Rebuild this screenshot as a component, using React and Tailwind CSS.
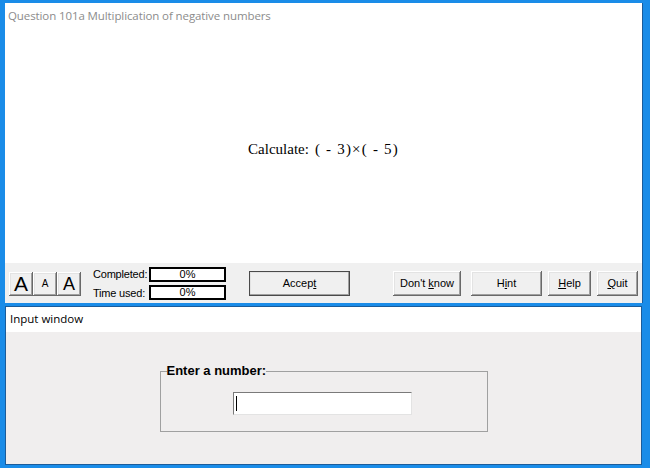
import React from "react";

const btn3d =
  "bg-[#f0f0f0] shadow-[inset_-1px_-1px_#696969,inset_1px_1px_#ffffff,inset_-2px_-2px_#a0a0a0,inset_2px_2px_#e3e3e3]";

function Btn({ className = "", children }) {
  return (
    <div
      className={`${btn3d} h-[25px] flex items-center justify-center text-[11px] text-black ${className}`}
      style={{ fontFamily: '"Liberation Sans", Arial, sans-serif' }}
    >
      {children}
    </div>
  );
}

export default function App() {
  return (
    <div className="w-[650px] h-[468px] bg-[#1a8ce8] pt-[3px] pl-[5px] pr-[7px] flex flex-col overflow-hidden">
      {/* Top window */}
      <div className="h-[300px] flex flex-col border-r border-[#1b5c9a]">
        <div className="h-[260px] bg-white flex flex-col">
          <div
            className="pl-[3px] pt-[5px] text-[11.5px] leading-[16px] text-[#8c8c8c] tracking-[-0.1px]"
            style={{ fontFamily: '"Open Sans", "Noto Sans", sans-serif' }}
          >
            Question 101a Multiplication of negative numbers
          </div>
          <div
            className="mt-[115px] flex justify-center text-[15px] leading-[20px] text-black"
            style={{ fontFamily: '"Liberation Serif", "Times New Roman", serif' }}
          >
            <span>Calculate:</span>
            <span className="ml-[6px] tracking-[1.2px]">( - 3)×( - 5)</span>
          </div>
        </div>
        <div
          className="h-[40px] bg-[#f0f0f0] flex items-center pl-[4px] text-[11px] text-black"
          style={{ fontFamily: '"Liberation Sans", Arial, sans-serif' }}
        >
          <div className="flex mt-[1px]">
            <div className={`${btn3d} w-[24px] h-[24px] flex items-center justify-center text-[21px] leading-none`}>A</div>
            <div className={`${btn3d} w-[24px] h-[24px] flex items-center justify-center text-[10px] leading-none`}>A</div>
            <div className={`${btn3d} w-[24px] h-[24px] flex items-center justify-center text-[18px] leading-none`}>A</div>
          </div>
          <div className="ml-[12px] flex flex-col gap-[2px] mt-[1px]">
            <div className="flex items-center">
              <span className="w-[56px] tracking-[-0.2px]">Completed:</span>
              <div className="w-[77px] h-[15px] bg-white border-2 border-black flex items-center justify-center leading-none">0%</div>
            </div>
            <div className="flex items-center">
              <span className="w-[56px] tracking-[-0.2px]">Time used:</span>
              <div className="w-[77px] h-[15px] bg-white border-2 border-black flex items-center justify-center leading-none">0%</div>
            </div>
          </div>
          <Btn className="ml-[23px] w-[101px] outline outline-1 outline-[#4a4a4a] -outline-offset-1">
            Accep<span className="underline">t</span>
          </Btn>
          <Btn className="ml-[43px] w-[68px]">
            Don't&nbsp;<span className="underline">k</span>now
          </Btn>
          <Btn className="ml-[10px] w-[71px]">
            H<span className="underline">i</span>nt
          </Btn>
          <Btn className="ml-[6px] w-[43px]">
            <span className="underline">H</span>elp
          </Btn>
          <Btn className="ml-[6px] w-[41px]">
            <span className="underline">Q</span>uit
          </Btn>
        </div>
      </div>

      {/* Bottom window */}
      <div className="mt-[3px] h-[159px] mr-[1px] border border-[#1b5c9a] flex flex-col">
        <div
          className="h-[25px] bg-white pl-[4px] pt-[5px] text-[11.5px] leading-[14px] text-black"
          style={{ fontFamily: '"Open Sans", "Noto Sans", sans-serif' }}
        >
          Input window
        </div>
        <div className="flex-1 bg-[#f0eeee] flex justify-center pt-[32px]">
          <fieldset className="w-[328px] h-[68px] border border-[#a0a0a0] pl-[6px] pr-0 pb-0 flex flex-col items-center">
            <legend
              className="px-0 text-[13px] leading-[14px] font-bold text-black"
              style={{ fontFamily: '"Liberation Sans", Arial, sans-serif' }}
            >
              Enter a number:
            </legend>
            <div className="mt-[14px] mr-[8px] w-[179px] h-[23px] bg-white border border-t-[#7a7a7a] border-l-[#7a7a7a] border-r-[#e3e3e3] border-b-[#e3e3e3] flex items-center pl-[2px]">
              <div className="w-[1px] h-[15px] bg-black" />
            </div>
          </fieldset>
        </div>
      </div>
    </div>
  );
}
